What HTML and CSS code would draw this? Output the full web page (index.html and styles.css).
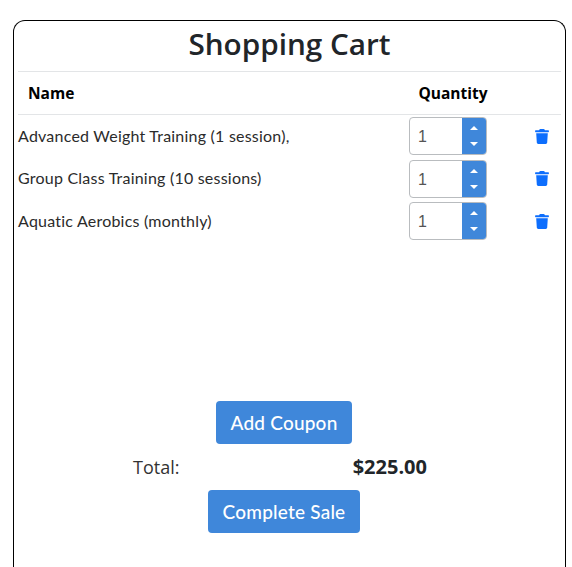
FILE: index.html
```html
<!DOCTYPE html>
<html lang="en">
<head>
<meta charset="utf-8">
<title>Shopping Cart</title>
<link rel="stylesheet" href="styles.css">
</head>
<body>
<svg class="defs" width="0" height="0" aria-hidden="true">
  <symbol id="trash" viewBox="0 0 14 15">
    <path d="M4.4.6C4.6.2 5 0 5.4 0h3.2c.4 0 .8.2 1 .6l.3.7h3.1c.5 0 1 .4 1 .9s-.5 1-1 1H1c-.5 0-1-.5-1-1s.5-.9 1-.9h3.1zM1.2 4.2h11.6l-.6 9.4c0 .8-.7 1.4-1.5 1.4H3.3c-.8 0-1.5-.6-1.5-1.4z"/>
  </symbol>
</svg>
<main class="card">
  <h1 class="title">Shopping Cart</h1>
  <div class="row head">
    <div class="c-name">Name</div>
    <div class="c-qty">Quantity</div>
  </div>
  <div class="row item">
    <div class="c-name">Advanced Weight Training (1 session),</div>
    <div class="c-qty"><div class="spin"><span class="val">1</span><span class="arrows"><i class="up"></i><i class="down"></i></span></div></div>
    <div class="c-del"><svg class="trash"><use href="#trash"/></svg></div>
  </div>
  <div class="row item">
    <div class="c-name">Group Class Training (10 sessions)</div>
    <div class="c-qty"><div class="spin"><span class="val">1</span><span class="arrows"><i class="up"></i><i class="down"></i></span></div></div>
    <div class="c-del"><svg class="trash"><use href="#trash"/></svg></div>
  </div>
  <div class="row item">
    <div class="c-name">Aquatic Aerobics (monthly)</div>
    <div class="c-qty"><div class="spin"><span class="val">1</span><span class="arrows"><i class="up"></i><i class="down"></i></span></div></div>
    <div class="c-del"><svg class="trash"><use href="#trash"/></svg></div>
  </div>
  <div class="actions">
    <button class="btn">Add Coupon</button>
    <div class="total"><span class="t-label">Total:</span><span class="t-value">$225.00</span></div>
    <button class="btn">Complete Sale</button>
  </div>
</main>
</body>
</html>
```

FILE: styles.css
```css
html, body { margin: 0; padding: 0; height: 567px; overflow: hidden; background: #fff; }
body { padding: 20px 6px 0 13px; box-sizing: border-box; font-family: "Lato", sans-serif; color: #212529; }
.defs { position: absolute; }
.card {
  box-sizing: border-box;
  width: 553px;
  height: 547px;
  border: 1px solid #000;
  border-bottom: 0;
  border-radius: 12px 12px 0 0;
  padding: 0 4px;
}
.title {
  margin: 0;
  height: 51px;
  box-sizing: border-box;
  font: 600 29.7px/46px "Open Sans", sans-serif;
  text-align: center;
  border-bottom: 1px solid #e3e5e7;
  color: #212529;
}
.row { display: flex; align-items: center; }
.head {
  height: 43px;
  box-sizing: border-box;
  border-bottom: 1px solid #e3e5e7;
  font: 700 15.5px "Open Sans", sans-serif;
  color: #000;
}
.c-name { width: 381px; flex: none; box-sizing: border-box; }
.head .c-name { padding-left: 10px; }
.head .c-qty { text-align: center; }
.c-qty { width: 108px; flex: none; box-sizing: border-box; }
.item { height: 42.5px; font-size: 16px; letter-spacing: .22px; color: #2b2b2b; }
.item .c-name { padding-bottom: 2px; }
.item .c-qty { padding-left: 10px; }
.c-del { flex: none; margin-left: 28px; line-height: 0; }
.spin {
  box-sizing: border-box;
  width: 78px;
  height: 38px;
  display: flex;
  border: 1px solid #b9bcbf;
  border-radius: 4px;
  overflow: hidden;
}
.val { flex: 1; font: 16px/38px "Liberation Sans", sans-serif; letter-spacing: 0; padding-left: 8px; color: #555; }
.arrows {
  width: 24px;
  background: #3f87da;
  display: flex;
  flex-direction: column;
  align-items: center;
  justify-content: space-between;
  padding: 8px 0;
  box-sizing: border-box;
}
.arrows i { width: 0; height: 0; border-left: 4.5px solid transparent; border-right: 4.5px solid transparent; }
.up { border-bottom: 4.5px solid #fff; }
.down { border-top: 4.5px solid #fff; }
.trash { width: 14px; height: 15px; fill: #0d6efd; }
.actions { display: flex; flex-direction: column; align-items: center; margin-top: 158px; padding-right: 11px; }
.btn {
  height: 43px;
  padding: 0 15px;
  background: #3f87da;
  color: #fff;
  border: 0;
  border-radius: 4px;
  font: 500 19px "Lato", sans-serif;
  letter-spacing: .2px;
}
.total { display: flex; width: 294px; height: 46px; margin-right: 8px; align-items: center; justify-content: space-between; font-family: "Open Sans", sans-serif; font-size: 18px; }
.t-label { color: #333; }
.t-value { font-size: 20px; font-weight: 700; }
```
